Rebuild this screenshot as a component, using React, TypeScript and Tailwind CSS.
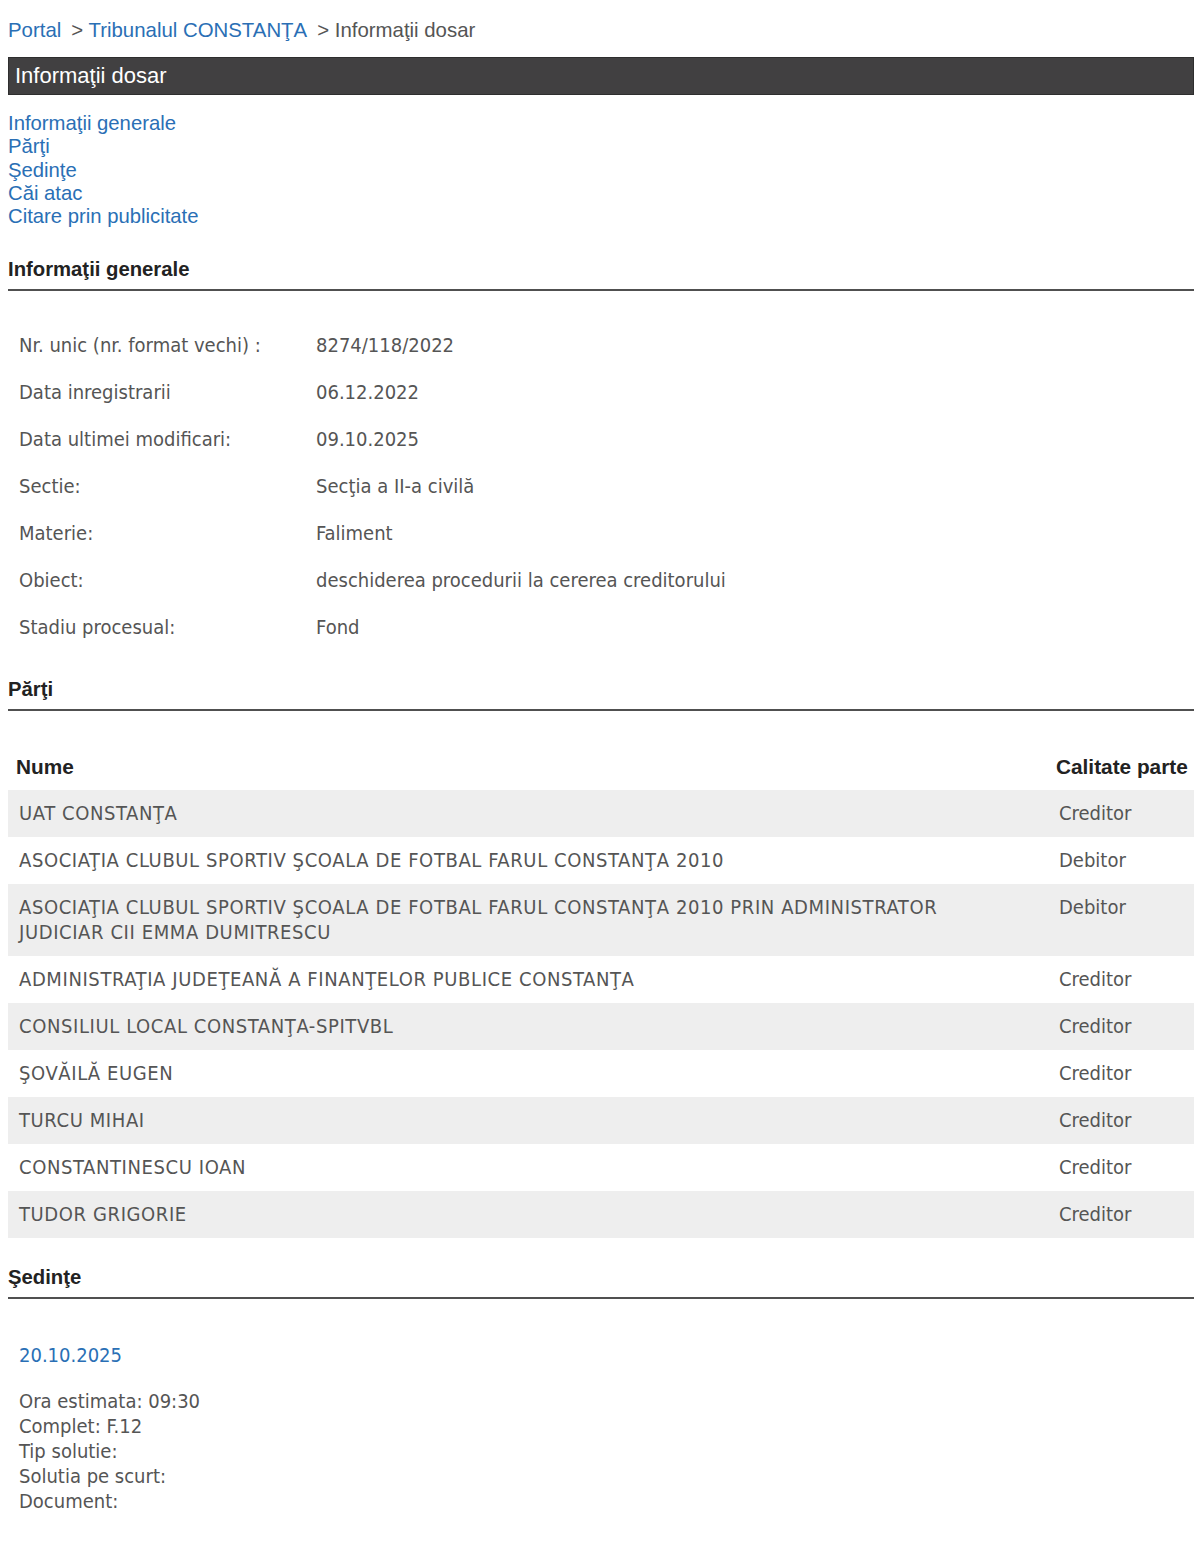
const INFO = [
  ["Nr. unic (nr. format vechi) :", "8274/118/2022"],
  ["Data inregistrarii", "06.12.2022"],
  ["Data ultimei modificari:", "09.10.2025"],
  ["Sectie:", "Secţia a II-a civilă"],
  ["Materie:", "Faliment"],
  ["Obiect:", "deschiderea procedurii la cererea creditorului"],
  ["Stadiu procesual:", "Fond"],
];

const PARTI = [
  ["UAT CONSTANŢA", "Creditor"],
  ["ASOCIAŢIA CLUBUL SPORTIV ŞCOALA DE FOTBAL FARUL CONSTANŢA 2010", "Debitor"],
  ["ASOCIAŢIA CLUBUL SPORTIV ŞCOALA DE FOTBAL FARUL CONSTANŢA 2010 PRIN ADMINISTRATOR JUDICIAR CII EMMA DUMITRESCU", "Debitor"],
  ["ADMINISTRAŢIA JUDEŢEANĂ A FINANŢELOR PUBLICE CONSTANŢA", "Creditor"],
  ["CONSILIUL LOCAL CONSTANŢA-SPITVBL", "Creditor"],
  ["ŞOVĂILĂ EUGEN", "Creditor"],
  ["TURCU MIHAI", "Creditor"],
  ["CONSTANTINESCU IOAN", "Creditor"],
  ["TUDOR GRIGORIE", "Creditor"],
];

const NAV = ["Informaţii generale", "Părţi", "Şedinţe", "Căi atac", "Citare prin publicitate"];

const body = "font-['Tahoma','DejaVu_Sans_Condensed','DejaVu_Sans',sans-serif]";

function SectionTitle({ children, className = "" }: { children: React.ReactNode; className?: string }) {
  return (
    <div className={`border-b-2 border-[#505050] pb-[8px] text-[20.3px] leading-[23px] font-bold text-[#222] ${className}`}>
      {children}
    </div>
  );
}

export default function App() {
  return (
    <div className="min-h-[1545px] bg-white font-['Liberation_Sans',Arial,sans-serif]">
      <div className="ml-[8px] w-[1186px]">
        {/* breadcrumb */}
        <div className="pt-[18px] text-[20.4px] leading-[24px] text-[#555]">
          <span className="text-[#2a6fb5]">Portal</span>
          <span className="ml-[10px]">&gt; </span>
          <span className="text-[#2a6fb5]">Tribunalul CONSTANŢA</span>
          <span className="ml-[10px]">&gt; Informaţii dosar</span>
        </div>

        <div className="mt-[15px] h-[38px] border border-[#2e2e2e] bg-[#414041] pl-[6px] text-[22px] leading-[36px] text-white">
          Informaţii dosar
        </div>

        {/* in-page links */}
        <div className="mt-[17px] flex flex-col text-[20.3px] leading-[23.3px] text-[#2a6fb5]">
          {NAV.map((n) => (
            <a key={n} href="#">{n}</a>
          ))}
        </div>

        <SectionTitle className="mt-[30px]">Informaţii generale</SectionTitle>

        <div className={`mt-[30px] text-[20px] text-[#555] ${body}`}>
          {INFO.map(([k, v]) => (
            <div key={k} className="flex h-[47px] items-center">
              <div className="w-[308px] pl-[11px]">{k}</div>
              <div>{v}</div>
            </div>
          ))}
        </div>

        <SectionTitle className="mt-[28px]">Părţi</SectionTitle>

        <table className="mt-[31px] w-full border-collapse">
          <thead>
            <tr className="h-[48px] text-left text-[20.8px] font-bold text-[#222]">
              <th className="pl-[8px] align-middle">Nume</th>
              <th className="w-[140px] pr-[6px] pl-[2px] align-middle">Calitate parte</th>
            </tr>
          </thead>
          <tbody className={`text-[20px] leading-[25px] text-[#555] ${body}`}>
            {PARTI.map(([n, c], i) => (
              <tr key={i} className={i % 2 === 0 ? "bg-[#eeeeee]" : "bg-white"}>
                <td className="py-[11px] pl-[11px] pr-[60px] align-top tracking-[0.6px]">{n}</td>
                <td className="py-[11px] pl-[5px] align-top">{c}</td>
              </tr>
            ))}
          </tbody>
        </table>

        <SectionTitle className="mt-[28px]">Şedinţe</SectionTitle>

        <div className={`pl-[11px] text-[20px] text-[#555] ${body}`}>
          <div className="mt-[44px] leading-[24px] text-[#2a6fb5]">20.10.2025</div>
          <div className="mt-[22px] leading-[25px]">
            <div>Ora estimata: 09:30</div>
            <div>Complet: F.12</div>
            <div>Tip solutie:</div>
            <div>Solutia pe scurt:</div>
            <div>Document:</div>
          </div>
        </div>
      </div>
    </div>
  );
}
